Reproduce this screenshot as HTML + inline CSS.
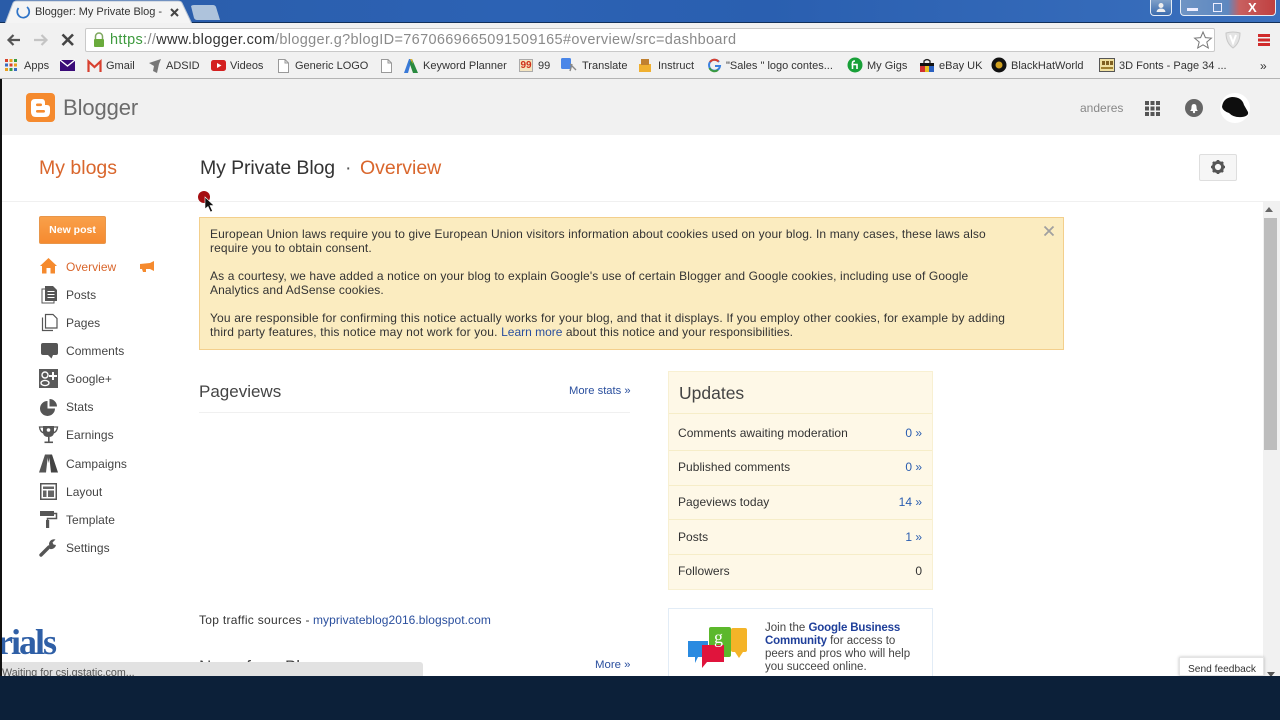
<!DOCTYPE html>
<html><head><meta charset="utf-8"><style>
html,body{margin:0;padding:0;width:1280px;height:720px;overflow:hidden;background:#fff}
body{position:relative;font-family:"Liberation Sans",sans-serif;color:#333}
.t{position:absolute;white-space:nowrap;font-size:12px;line-height:14px}
.n{letter-spacing:.125px}
.b{position:absolute}
.bm{position:absolute;top:59px;font-size:11px;line-height:15px;color:#333;white-space:nowrap}
.nav{position:absolute;left:66px;font-size:12px;line-height:14px;color:#444;white-space:nowrap;letter-spacing:.03px}
a{color:#2a4f9e;text-decoration:none}
svg{position:absolute;overflow:visible}
.u{position:absolute;left:678px;font-size:12px;line-height:14px;color:#333;white-space:nowrap;letter-spacing:.04px}
.v{position:absolute;right:358px;font-size:12px;line-height:14px;color:#2a5db0;white-space:nowrap}
.ln{position:absolute;left:669px;width:263px;height:1px;background:#f6edc8}
.h{position:absolute;white-space:nowrap;color:#333}
</style></head><body>

<!-- title bar -->
<div class="b" style="left:0;top:0;width:1280px;height:22px;background:linear-gradient(90deg,#2a5ca8 0%,#2c62b4 40%,#2a5fb0 60%,#3a70be 100%)"></div>
<div class="b" style="left:0;top:22px;width:1280px;height:1px;background:#12305a"></div>
<svg width="230" height="24" style="left:0;top:0"><path d="M5 24 L13 3 Q14 1 17 1 L178 1 Q181 1 182 3 L192 24 Z" fill="#f4f4f4" stroke="#b8c4d4"/><path d="M191 6 Q192 5 194 5 L213 5 Q215 5 216 7 L220 20 L197 20 Q195 20 194 18 Z" fill="#aec3dc"/></svg>
<svg width="16" height="16" style="left:15px;top:4px"><path d="M3.5 4 A6 6 0 1 0 12 3" fill="none" stroke="#2f74c8" stroke-width="1.7"/></svg>
<div class="t" style="left:35px;top:5px;font-size:11px;letter-spacing:-.03px;color:#333">Blogger: My Private Blog -</div>
<svg width="10" height="10" style="left:170px;top:8px"><path d="M1 1 L8 8 M8 1 L1 8" stroke="#444" stroke-width="2"/></svg>

<!-- window buttons -->
<div class="b" style="left:1150px;top:0;width:22px;height:16px;background:linear-gradient(#7fa0c8,#3c6cae);border:1px solid #e4ecf6;border-top:0;border-radius:0 0 4px 4px;box-sizing:border-box"></div>
<svg width="12" height="12" style="left:1155px;top:2px"><circle cx="6" cy="3.5" r="2.5" fill="#eee"/><path d="M1.5 10 Q2 6.5 6 6.5 Q10 6.5 10.5 10 Z" fill="#eee"/></svg>
<div class="b" style="left:1180px;top:0;width:96px;height:16px;background:linear-gradient(90deg,#6f94c4 0,#5d88c0 50%,#c86060 62%,#c04040 100%);border:1px solid #e4ecf6;border-top:0;border-radius:0 0 4px 4px;box-sizing:border-box"></div>
<div class="b" style="left:1187px;top:8px;width:11px;height:3px;background:#eef"></div>
<div class="b" style="left:1213px;top:3px;width:9px;height:9px;border:1.5px solid #eef;box-sizing:border-box"></div>
<div class="t" style="left:1248px;top:1px;font-weight:bold;color:#fff;font-size:13px">X</div>

<!-- toolbar -->
<div class="b" style="left:0;top:23px;width:1280px;height:55px;background:#f1f1f1"></div>
<div class="b" style="left:0;top:78px;width:1280px;height:1px;background:#b4b4b4"></div>
<svg width="20" height="16" style="left:6px;top:32px"><path d="M14 8 H3 M7.5 3 L2.5 8 L7.5 13" fill="none" stroke="#555" stroke-width="2.2"/></svg>
<svg width="20" height="16" style="left:33px;top:32px"><path d="M1 8 H13 M8.5 3 L13.5 8 L8.5 13" fill="none" stroke="#c4c4c4" stroke-width="2.2"/></svg>
<svg width="14" height="14" style="left:61px;top:33px"><path d="M1.5 1.5 L12 12 M12 1.5 L1.5 12" fill="none" stroke="#444" stroke-width="2.6"/></svg>
<div class="b" style="left:85px;top:28px;width:1130px;height:24px;box-sizing:border-box;background:#fff;border:1px solid #c9c9c9;border-radius:2px"></div>
<svg width="14" height="16" style="left:92px;top:32px"><path d="M3.5 7 V4.5 A3.5 3.5 0 0 1 10.5 4.5 V7" fill="none" stroke="#7fa860" stroke-width="1.5"/><rect x="2" y="7" width="10" height="8" rx="1" fill="#6aab3c"/></svg>
<div class="t" style="left:110px;top:32px;font-size:14.5px;line-height:17px;color:#8a8a8a;letter-spacing:.34px"><span style="color:#3d9a3d">https</span>://<span style="color:#333">www.blogger.com</span>/blogger.g?blogID=7670669665091509165#overview/src=dashboard</div>
<svg width="18" height="18" style="left:1194px;top:31px"><path d="M9 1 L11.4 6.6 L17.4 7.1 L12.8 11 L14.3 17 L9 13.8 L3.7 17 L5.2 11 L.6 7.1 L6.6 6.6 Z" fill="#fff" stroke="#777"/></svg>
<svg width="16" height="18" style="left:1225px;top:31px"><path d="M1 2 Q8 0 15 2 Q15 12 8 17 Q1 12 1 2 Z" fill="#e4e4e4" stroke="#c8c8c8"/><path d="M5 4 L8 12 L11 4" fill="none" stroke="#fff" stroke-width="2"/></svg>
<div class="b" style="left:1258px;top:34px;width:12px;height:3px;background:#d02a2a;box-shadow:0 4.5px 0 #d02a2a,0 9px 0 #d02a2a"></div>

<!-- bookmarks -->
<svg width="14" height="14" style="left:5px;top:59px"><g><rect x="0" y="0" width="3" height="3" fill="#d9412c"/><rect x="4.5" y="0" width="3" height="3" fill="#e8a020"/><rect x="9" y="0" width="3" height="3" fill="#3a9a40"/><rect x="0" y="4.5" width="3" height="3" fill="#3a6cc0"/><rect x="4.5" y="4.5" width="3" height="3" fill="#d9412c"/><rect x="9" y="4.5" width="3" height="3" fill="#e8a020"/><rect x="0" y="9" width="3" height="3" fill="#e8a020"/><rect x="4.5" y="9" width="3" height="3" fill="#3a9a40"/><rect x="9" y="9" width="3" height="3" fill="#3a6cc0"/></g></svg>
<div class="bm" style="left:24px">Apps</div>
<svg width="16" height="12" style="left:60px;top:60px"><rect width="15" height="11" fill="#3a0a78"/><path d="M0 0 L7.5 6 L15 0" fill="none" stroke="#fff" stroke-width="1.4"/></svg>
<svg width="15" height="12" style="left:87px;top:60px"><path d="M1.5 12 V1.5 L7.5 7 L13.5 1.5 V12" fill="none" stroke="#d8402f" stroke-width="2.2"/></svg>
<div class="bm" style="left:106px">Gmail</div>
<svg width="14" height="16" style="left:148px;top:58px"><path d="M1 5 L13 1 L11 6 L9 15 L5 13 L6 8 Z" fill="#777"/></svg>
<div class="bm" style="left:166px">ADSID</div>
<svg width="15" height="11" style="left:211px;top:60px"><rect width="15" height="11" rx="2.5" fill="#d42020"/><path d="M6 3 L10.5 5.5 L6 8 Z" fill="#fff"/></svg>
<div class="bm" style="left:230px">Videos</div>
<svg width="11" height="14" style="left:278px;top:59px"><path d="M.5 .5 H7 L10.5 4 V13.5 H.5 Z M7 .5 V4 H10.5" fill="#fff" stroke="#999"/></svg>
<div class="bm" style="left:295px">Generic LOGO</div>
<svg width="11" height="14" style="left:381px;top:59px"><path d="M.5 .5 H7 L10.5 4 V13.5 H.5 Z M7 .5 V4 H10.5" fill="#fff" stroke="#999"/></svg>
<svg width="14" height="15" style="left:404px;top:58px"><path d="M0 15 L5 1 H8 L4 15 Z" fill="#3a7ad8"/><path d="M8 1 L14 15 H9 L5.5 5 Z" fill="#2a8a40"/><path d="M6 1 H8 L9 6 Z" fill="#e8b020"/></svg>
<div class="bm" style="left:423px">Keyword Planner</div>
<div class="b" style="left:519px;top:59px;width:14px;height:13px;background:#f4e4c0;border:1px solid #aaa;box-sizing:border-box;color:#d03018;font:bold 10px/11px 'Liberation Sans',sans-serif;text-align:center">99</div>
<div class="bm" style="left:538px">99</div>
<svg width="15" height="15" style="left:561px;top:58px"><rect width="10" height="11" rx="1.5" fill="#4a86e8"/><path d="M9 6 L15 12 M11 6 L9 13" stroke="#888" stroke-width="1.4"/></svg>
<div class="bm" style="left:582px">Translate</div>
<svg width="16" height="15" style="left:638px;top:58px"><rect x="1" y="6" width="12" height="8" fill="#f0b030"/><rect x="3" y="1" width="8" height="6" fill="#c08030"/></svg>
<div class="bm" style="left:658px">Instruct</div>
<svg width="13" height="13" style="left:708px;top:59px"><path d="M11 3 A5.5 5.5 0 1 0 12 7 H7" fill="none" stroke="#3a80e0" stroke-width="2"/><path d="M2 3 A5.5 5.5 0 0 1 10.5 2.5" fill="none" stroke="#d8402f" stroke-width="2"/><path d="M1.5 9 A5.5 5.5 0 0 0 10 11" fill="none" stroke="#3a9a40" stroke-width="2"/></svg>
<div class="bm" style="left:726px">"Sales " logo contes...</div>
<svg width="16" height="16" style="left:847px;top:57px"><circle cx="8" cy="8" r="7.5" fill="#18a038"/><path d="M5.5 12 V6 Q5.5 4 8 4 M4.5 7.5 H10 V12" fill="none" stroke="#fff" stroke-width="1.6"/></svg>
<div class="bm" style="left:867px">My Gigs</div>
<svg width="16" height="15" style="left:919px;top:58px"><path d="M5 5 V3 Q8 0 11 3 V5" fill="none" stroke="#222" stroke-width="1.3"/><rect x="1" y="5" width="14" height="3" fill="#111"/><rect x="1" y="8" width="5" height="6" fill="#d03030"/><rect x="6" y="8" width="4" height="6" fill="#e8c020"/><rect x="10" y="8" width="5" height="6" fill="#2a60c0"/></svg>
<div class="bm" style="left:939px">eBay UK</div>
<svg width="16" height="16" style="left:991px;top:57px"><circle cx="8" cy="8" r="7.5" fill="#111"/><circle cx="8" cy="8" r="3.5" fill="#d0a020"/></svg>
<div class="bm" style="left:1011px">BlackHatWorld</div>
<svg width="16" height="15" style="left:1099px;top:58px"><rect x=".5" y=".5" width="15" height="13" fill="#f0e0a0" stroke="#555"/><rect x="3" y="3" width="3" height="4" fill="#806020"/><rect x="7" y="3" width="3" height="4" fill="#806020"/><rect x="11" y="3" width="3" height="4" fill="#806020"/><rect x="2" y="9" width="12" height="2" fill="#a08030"/></svg>
<div class="bm" style="left:1119px">3D Fonts - Page 34 ...</div>
<div class="bm" style="left:1260px;font-size:12px">»</div>

<!-- page header -->
<div class="b" style="left:2px;top:79px;width:1278px;height:56px;background:#f1f1f1"></div>
<div class="b" style="left:0;top:79px;width:2px;height:597px;background:#111"></div>
<svg width="30" height="30" style="left:26px;top:93px"><rect width="29" height="29" rx="4" fill="#f58a2e"/><path d="M9 6 H16 Q19 6 19 10 V12 H21 Q24 12 24 15 V19 Q24 24 19 24 H10 Q5 24 5 19 V10 Q5 6 9 6 Z" fill="#fff"/><rect x="10" y="10.5" width="6" height="2.6" rx="1.3" fill="#f58a2e"/><rect x="10" y="17" width="9" height="2.6" rx="1.3" fill="#f58a2e"/></svg>
<div class="h" style="left:63px;top:94px;font-size:22px;line-height:27px;letter-spacing:-.1px;color:#6c6c6c">Blogger</div>
<div class="t" style="left:1080px;top:101px;color:#888">anderes</div>
<div class="b" style="left:1145px;top:101px;width:4px;height:4px;background:#555;box-shadow:5.5px 0 #555,11px 0 #555,0 5.5px #555,5.5px 5.5px #555,11px 5.5px #555,0 11px #555,5.5px 11px #555,11px 11px #555"></div>
<svg width="18" height="18" style="left:1185px;top:99px"><circle cx="9" cy="9" r="9" fill="#666"/><path d="M5 12 Q6.5 11 6.5 8 Q6.5 5 9 5 Q11.5 5 11.5 8 Q11.5 11 13 12 Z" fill="#fff"/><circle cx="9" cy="13" r="1.2" fill="#fff"/></svg>
<svg width="30" height="30" style="left:1220px;top:93px"><circle cx="15" cy="15" r="15" fill="#fff"/><path d="M2 14 Q3 5 12 4 Q22 4 24 12 L28 19 Q29 23 22 24 Q14 25 9 20 Q3 18 2 14 Z" fill="#0e0e0e"/></svg>

<div class="h" style="left:39px;top:156px;font-size:19.5px;line-height:24px;color:#d9662c">My blogs</div>
<div class="h" style="left:200px;top:156px;font-size:19.5px;line-height:24px;letter-spacing:-.1px;color:#333">My Private Blog</div>
<div class="h" style="left:345px;top:156px;font-size:19.5px;line-height:24px;color:#555">·</div>
<div class="h" style="left:360px;top:156px;font-size:19.5px;line-height:24px;color:#d9662c">Overview</div>
<div class="b" style="left:1199px;top:154px;width:38px;height:27px;box-sizing:border-box;background:#f6f6f6;border:1px solid #dedede;border-radius:2px"></div>
<svg width="18" height="18" style="left:1209px;top:158px"><circle cx="9" cy="9" r="4.6" fill="none" stroke="#555" stroke-width="3"/><path d="M9 2 V4 M9 14 V16 M2 9 H4 M14 9 H16 M4 4 L5.4 5.4 M12.6 12.6 L14 14 M14 4 L12.6 5.4 M5.4 12.6 L4 14" stroke="#555" stroke-width="2.6"/></svg>
<div class="b" style="left:2px;top:201px;width:1278px;height:1px;background:#f0f0f0"></div>

<!-- click marker and cursor -->
<div class="b" style="left:198px;top:191px;width:12px;height:12px;border-radius:50%;background:#a50f12"></div>
<svg width="12" height="18" style="left:204px;top:197px"><path d="M1 0 V12 L4 9.5 L6.5 15 L8.5 14 L6 8.5 H10 Z" fill="#111" stroke="#fff" stroke-width=".6"/></svg>

<!-- sidebar -->
<div class="b" style="left:39px;top:216px;width:67px;height:28px;box-sizing:border-box;background:linear-gradient(#f9a04a,#f58a30);border:1px solid #e8964a;border-radius:2px"></div>
<div class="t" style="left:39px;top:223px;width:67px;text-align:center;font-size:10.5px;font-weight:bold;color:#fff">New post</div>

<svg width="18" height="16" style="left:40px;top:258px"><path d="M0 8 L8.5 0 L17 8 L15 8 V15.5 H10.5 V10 H6.5 V15.5 H2 V8 Z" fill="#f58a2e"/></svg>
<div class="nav" style="top:260px;color:#d9662c">Overview</div>
<svg width="15" height="12" style="left:140px;top:261px"><path d="M0 3 L10 2 L14 0 V10 L10 8 H6 L6 11 H3 L2 8 H0 Z" fill="#f58a2e"/></svg>

<svg width="16" height="17" style="left:42px;top:286px"><rect x="0" y="3" width="12" height="14" fill="#fff" stroke="#555"/><path d="M3 0 H11 L15 4 V15 H3 Z" fill="#555"/><path d="M5.5 5.5 H12.5 M5.5 8.5 H12.5 M5.5 11.5 H12.5" stroke="#fff"/></svg>
<div class="nav" style="top:288px">Posts</div>
<svg width="16" height="17" style="left:42px;top:314px"><path d="M.5 3.5 V16.5 H11" fill="none" stroke="#555" stroke-width="1.2"/><path d="M3.5 .5 H11 L15 4.5 V14 H3.5 Z" fill="#fff" stroke="#555" stroke-width="1.2"/></svg>
<div class="nav" style="top:316px">Pages</div>
<svg width="17" height="16" style="left:41px;top:343px"><path d="M2 0 H15 Q17 0 17 2 V10 Q17 12 15 12 H12 L10.5 15.5 L7 12 H2 Q0 12 0 10 V2 Q0 0 2 0 Z" fill="#555"/></svg>
<div class="nav" style="top:344px">Comments</div>
<svg width="19" height="19" style="left:39px;top:369px"><rect width="19" height="19" fill="#5a5a5a"/><path d="M13 3 H15 V6 H18 V8 H15 V11 H13 V8 H10 V6 H13 Z" fill="#fff"/><circle cx="6" cy="6" r="3" fill="none" stroke="#fff" stroke-width="1.4"/><ellipse cx="6" cy="14" rx="4" ry="2.6" fill="none" stroke="#fff" stroke-width="1.4"/></svg>
<div class="nav" style="top:372px">Google+</div>
<svg width="18" height="17" style="left:40px;top:399px"><path d="M7.5 2 A7.5 7.5 0 1 0 15 9.5 H7.5 Z" fill="#555"/><path d="M9.5 0 A7.5 7.5 0 0 1 17 7.5 H9.5 Z" fill="#555"/></svg>
<div class="nav" style="top:400px">Stats</div>
<svg width="19" height="19" style="left:39px;top:425px"><path d="M4 1 H15 V7 Q15 12 9.5 12 Q4 12 4 7 Z" fill="#555"/><path d="M4 2 H.5 Q1 7 5 8 M15 2 H18.5 Q18 7 14 8" fill="none" stroke="#555" stroke-width="1.3"/><rect x="9" y="12" width="1.6" height="5" fill="#555"/><rect x="5.5" y="16.5" width="8.5" height="1.6" fill="#555"/><circle cx="9.5" cy="5" r="1.8" fill="#fff"/></svg>
<div class="nav" style="top:428px">Earnings</div>
<svg width="19" height="19" style="left:39px;top:454px"><path d="M0 18.5 L6 .5 H9 L7 18.5 Z" fill="#555"/><path d="M10 .5 H13 L19 18.5 H12 Z" fill="#444"/><path d="M8 .5 H11 L9.5 9 Z" fill="#555"/></svg>
<div class="nav" style="top:457px">Campaigns</div>
<svg width="17" height="17" style="left:40px;top:483px"><rect x=".75" y=".75" width="15.5" height="15.5" fill="#fff" stroke="#555" stroke-width="1.5"/><rect x="3" y="3.5" width="11" height="2.5" fill="#666"/><rect x="3" y="7.5" width="3.5" height="6.5" fill="#666"/><rect x="8" y="7.5" width="6" height="6.5" fill="#666"/></svg>
<div class="nav" style="top:485px">Layout</div>
<svg width="17" height="17" style="left:40px;top:511px"><rect x="0" y="0" width="14" height="5" fill="#555"/><path d="M14 2.5 H16.5 V7.5 H7.5 V16" fill="none" stroke="#555" stroke-width="1.5"/><rect x="6" y="9" width="3.2" height="8" fill="#555"/></svg>
<div class="nav" style="top:513px">Template</div>
<svg width="18" height="18" style="left:39px;top:539px"><path d="M2 16 L10 8" stroke="#555" stroke-width="3.4" stroke-linecap="round"/><path d="M10 5 A5 5 0 0 1 16.5 .5 L13.5 3.5 L14.5 5.5 L17 6 A5 5 0 0 1 11 10 Z" fill="#555"/></svg>
<div class="nav" style="top:541px">Settings</div>

<!-- notice -->
<div class="b" style="left:199px;top:217px;width:865px;height:133px;box-sizing:border-box;background:#fbecc0;border:1px solid #f3cf8c"></div>
<div class="t n" style="left:210px;top:227px">European Union laws require you to give European Union visitors information about cookies used on your blog. In many cases, these laws also</div>
<div class="t n" style="left:210px;top:241px">require you to obtain consent.</div>
<div class="t n" style="left:210px;top:269px">As a courtesy, we have added a notice on your blog to explain Google's use of certain Blogger and Google cookies, including use of Google</div>
<div class="t n" style="left:210px;top:283px">Analytics and AdSense cookies.</div>
<div class="t" style="left:210px;top:311px;letter-spacing:.16px">You are responsible for confirming this notice actually works for your blog, and that it displays. If you employ other cookies, for example by adding</div>
<div class="t" style="left:210px;top:325px;letter-spacing:.16px">third party features, this notice may not work for you. <a style="letter-spacing:0">Learn more</a><span style="letter-spacing:.1px"> about this notice and your responsibilities.</span></div>
<svg width="12" height="12" style="left:1043px;top:225px"><path d="M1.5 1.5 L10.5 10.5 M10.5 1.5 L1.5 10.5" stroke="#a0a0a0" stroke-width="1.8"/></svg>

<!-- pageviews -->
<div class="h" style="left:199px;top:381px;font-size:17px;line-height:22px;color:#444">Pageviews</div>
<div class="t" style="left:569px;top:384px;font-size:11.2px"><a>More stats »</a></div>
<div class="b" style="left:199px;top:412px;width:431px;height:1px;background:#f0f0f0"></div>
<div class="t" style="left:199px;top:613px;letter-spacing:.3px">Top traffic sources -</div>
<div class="t" style="left:313px;top:613px;letter-spacing:.06px"><a>myprivateblog2016.blogspot.com</a></div>
<div class="h" style="left:199px;top:656px;font-size:17px;line-height:22px;color:#444">News from Blogger</div>
<div class="t" style="left:595px;top:658px;font-size:11.4px"><a>More »</a></div>

<!-- updates -->
<div class="b" style="left:668px;top:371px;width:265px;height:219px;box-sizing:border-box;background:#fef8e7;border:1px solid #f8f0d2"></div>
<div class="h" style="left:679px;top:382px;font-size:17.5px;line-height:22px;color:#444">Updates</div>
<div class="ln" style="top:413px"></div><div class="ln" style="top:450px"></div><div class="ln" style="top:485px"></div><div class="ln" style="top:519px"></div><div class="ln" style="top:554px"></div>
<div class="u" style="top:426px">Comments awaiting moderation</div><div class="v" style="top:426px">0 »</div>
<div class="u" style="top:460px">Published comments</div><div class="v" style="top:460px">0 »</div>
<div class="u" style="top:495px">Pageviews today</div><div class="v" style="top:495px">14 »</div>
<div class="u" style="top:530px">Posts</div><div class="v" style="top:530px">1 »</div>
<div class="u" style="top:564px">Followers</div><div class="v" style="top:564px;color:#333">0</div>

<!-- community -->
<div class="b" style="left:668px;top:608px;width:265px;height:80px;box-sizing:border-box;background:#fff;border:1px solid #e2ecf6"></div>
<svg width="62" height="46" style="left:688px;top:625px"><path d="M0 16 H20 V32 H10 L7 38 V32 H0 Z" fill="#2a8ae0"/><rect x="21" y="2" width="22" height="30" rx="2" fill="#5cb82c"/><rect x="43" y="3" width="16" height="24" rx="2" fill="#f4b428"/><path d="M47 27 H55 L51 33 Z" fill="#f4b428"/><path d="M14 20 H36 V37 H19 L14 43 Z" fill="#e0143c"/><text x="26" y="18" font-family="Liberation Serif,serif" font-size="18" fill="#fff">g</text></svg>
<div class="t" style="left:765px;top:622px;font-size:11.5px;line-height:13.1px;color:#444">Join the <a style="font-weight:bold;color:#1f3f9a;letter-spacing:-.15px">Google Business</a><br><a style="font-weight:bold;color:#1f3f9a;letter-spacing:-.15px">Community</a> for access to<br>peers and pros who will help<br>you succeed online.</div>

<!-- scrollbar -->
<div class="b" style="left:1263px;top:202px;width:17px;height:474px;background:#f1f1f1"></div>
<div class="b" style="left:1265px;top:207px;width:0;height:0;border:4px solid transparent;border-top:0;border-bottom:5px solid #666"></div>
<div class="b" style="left:1264px;top:218px;width:13px;height:232px;background:#bdbdbd"></div>
<div class="b" style="left:1267px;top:672px;width:0;height:0;border:4px solid transparent;border-bottom:0;border-top:5px solid #555"></div>

<!-- feedback -->
<div class="b" style="left:1179px;top:657px;width:85px;height:19px;box-sizing:border-box;background:#fff;border:1px solid #e4e4e4;box-shadow:0 0 3px rgba(0,0,0,.25)"></div>
<div class="t" style="left:1188px;top:663px;font-size:10.2px;color:#333">Send feedback</div>

<!-- status bubble -->
<div class="b" style="left:2px;top:662px;width:421px;height:14px;background:#e2e2e2;border-radius:0 3px 0 0;overflow:hidden"><div class="t" style="left:0;top:4px;font-size:10.7px;color:#555">Waiting for csi.gstatic.com...</div></div>

<!-- watermark -->
<div class="h" style="left:-19px;top:620px;width:76px;font:bold 36px/44px 'Liberation Serif',serif;letter-spacing:-2px;color:#2f5fa6;height:44px;overflow:hidden;clip-path:inset(0 0 0 21px)">orials</div>

<!-- bottom bar -->
<div class="b" style="left:0;top:676px;width:1280px;height:44px;background:#0c2039"></div>
</body></html>
